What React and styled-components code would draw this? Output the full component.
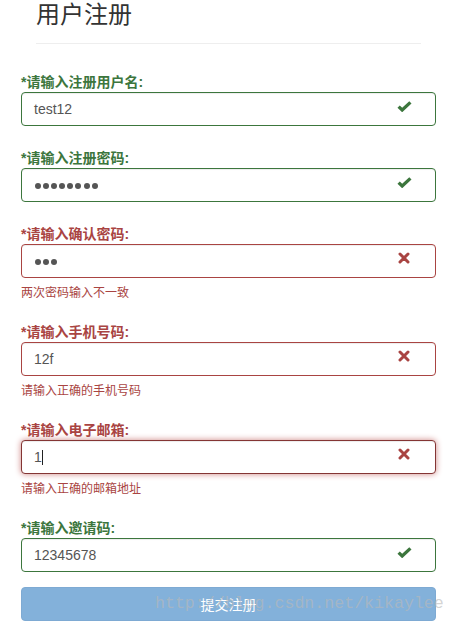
import React from "react";
import styled, { createGlobalStyle, css } from "styled-components";

const GlobalStyle = createGlobalStyle`
  html, body { margin: 0; padding: 0; background: #fff; }
  body {
    font-family: "Liberation Sans", "Noto Sans CJK SC", sans-serif;
    font-size: 14px;
    color: #333;
  }
  * { box-sizing: border-box; }
`;

const COLORS = {
  success: { text: "#3c763d", border: "#3c763d", glow: "#67b168" },
  error: { text: "#a94442", border: "#a94442", glow: "#ce8483", focus: "#843534" },
};

const Page = styled.div`
  position: relative;
  width: 456px;
  padding: 0 20px 24px 21px;
`;

const Header = styled.div`
  margin: 0 15px;
  padding-bottom: 17px;
  border-bottom: 1px solid #eee;
`;

const Title = styled.h1`
  margin: 0;
  font-family: "Noto Sans CJK SC", "Liberation Sans", sans-serif;
  font-size: 24px;
  line-height: 26px;
  font-weight: 400;
  color: #333;
`;

const Form = styled.form`
  margin-top: 28px;
`;

const Group = styled.div`
  margin-bottom: 22px;
  &:last-of-type { margin-bottom: 15px; }
`;

const Label = styled.label`
  display: block;
  font-family: "Liberation Sans", "Noto Sans CJK SC", sans-serif;
  font-weight: 700;
  font-size: 14px;
  line-height: 20px;
  color: ${(p) => COLORS[p.$state].text};
`;

const FieldWrap = styled.div`
  position: relative;
`;

const Field = styled.div`
  display: flex;
  align-items: center;
  height: 34px;
  padding: 6px 12px;
  border: 1px solid ${(p) => (p.$focus && COLORS[p.$state].focus) || COLORS[p.$state].border};
  border-radius: 4px;
  background: #fff;
  font-family: "Liberation Sans", Arial, sans-serif;
  font-size: 14px;
  line-height: 20px;
  color: #555;
  box-shadow: inset 0 1px 1px rgba(0, 0, 0, 0.075);
  ${(p) =>
    p.$focus &&
    css`
      box-shadow: inset 0 1px 1px rgba(0, 0, 0, 0.075), 0 0 6px ${COLORS[p.$state].glow};
    `}
`;

const Dots = styled.span`
  display: flex;
  gap: 2.1px;
  padding-left: 1px;
  padding-top: 1px;
`;

const Dot = styled.span`
  width: 6px;
  height: 6px;
  border-radius: 50%;
  background: #555;
`;

const Caret = styled.span`
  display: inline-block;
  width: 1px;
  height: 15px;
  margin-left: 0.5px;
  background: #222;
`;

const Feedback = styled.span`
  position: absolute;
  top: 0;
  right: 15px;
  width: 34px;
  height: 28px;
  display: flex;
  align-items: center;
  justify-content: center;
  pointer-events: none;
  color: ${(p) => COLORS[p.$state].text};
`;

const Help = styled.div`
  margin-top: 5px;
  font-family: "Noto Sans CJK SC", "Liberation Sans", sans-serif;
  font-size: 12px;
  line-height: 17px;
  color: #a94442;
`;

const Submit = styled.button`
  display: block;
  width: 100%;
  height: 34px;
  padding: 6px 12px;
  border: 1px solid #7eaad3;
  border-radius: 4px;
  background: #83b1da;
  color: #fff;
  font-family: "Noto Sans CJK SC", "Liberation Sans", sans-serif;
  font-size: 14px;
  line-height: 20px;
  cursor: not-allowed;
`;

const Watermark = styled.div`
  position: absolute;
  left: 155px;
  top: 596px;
  font-family: "Liberation Mono", monospace;
  font-size: 16.6px;
  line-height: 1;
  color: rgba(185, 185, 185, 0.62);
  white-space: nowrap;
  pointer-events: none;
`;

const OkIcon = () => (
  <svg width="15" height="11" viewBox="0 0 15 11" aria-hidden="true">
    <polyline
      points="1.6,5.6 5.2,9 13.4,1.4"
      fill="none"
      stroke="currentColor"
      strokeWidth="3.3"
      strokeLinejoin="miter"
    />
  </svg>
);

const RemoveIcon = () => (
  <svg width="12" height="12" viewBox="0 0 12 12" aria-hidden="true">
    <path
      d="M2 2 L10 10 M10 2 L2 10"
      fill="none"
      stroke="currentColor"
      strokeWidth="3"
      strokeLinecap="round"
    />
  </svg>
);

const fields = [
  { label: "*请输入注册用户名:", value: "test12", state: "success" },
  { label: "*请输入注册密码:", dots: 8, state: "success" },
  { label: "*请输入确认密码:", dots: 3, state: "error", help: "两次密码输入不一致" },
  { label: "*请输入手机号码:", value: "12f", state: "error", help: "请输入正确的手机号码" },
  { label: "*请输入电子邮箱:", value: "1", state: "error", help: "请输入正确的邮箱地址", focus: true },
  { label: "*请输入邀请码:", value: "12345678", state: "success" },
];

export default function App() {
  return (
    <>
      <GlobalStyle />
      <Page>
        <Header>
          <Title>用户注册</Title>
        </Header>
        <Form onSubmit={(e) => e.preventDefault()}>
          {fields.map((f) => (
            <Group key={f.label}>
              <Label $state={f.state}>{f.label}</Label>
              <FieldWrap>
                <Field $state={f.state} $focus={f.focus}>
                  {f.dots ? (
                    <Dots>
                      {Array.from({ length: f.dots }).map((_, i) => (
                        <Dot key={i} />
                      ))}
                    </Dots>
                  ) : (
                    <span>{f.value}</span>
                  )}
                  {f.focus && <Caret />}
                </Field>
                <Feedback $state={f.state}>
                  {f.state === "success" ? <OkIcon /> : <RemoveIcon />}
                </Feedback>
              </FieldWrap>
              {f.help && <Help>{f.help}</Help>}
            </Group>
          ))}
          <Submit type="submit" disabled>
            提交注册
          </Submit>
        </Form>
        <Watermark>http://blog.csdn.net/kikaylee</Watermark>
      </Page>
    </>
  );
}
